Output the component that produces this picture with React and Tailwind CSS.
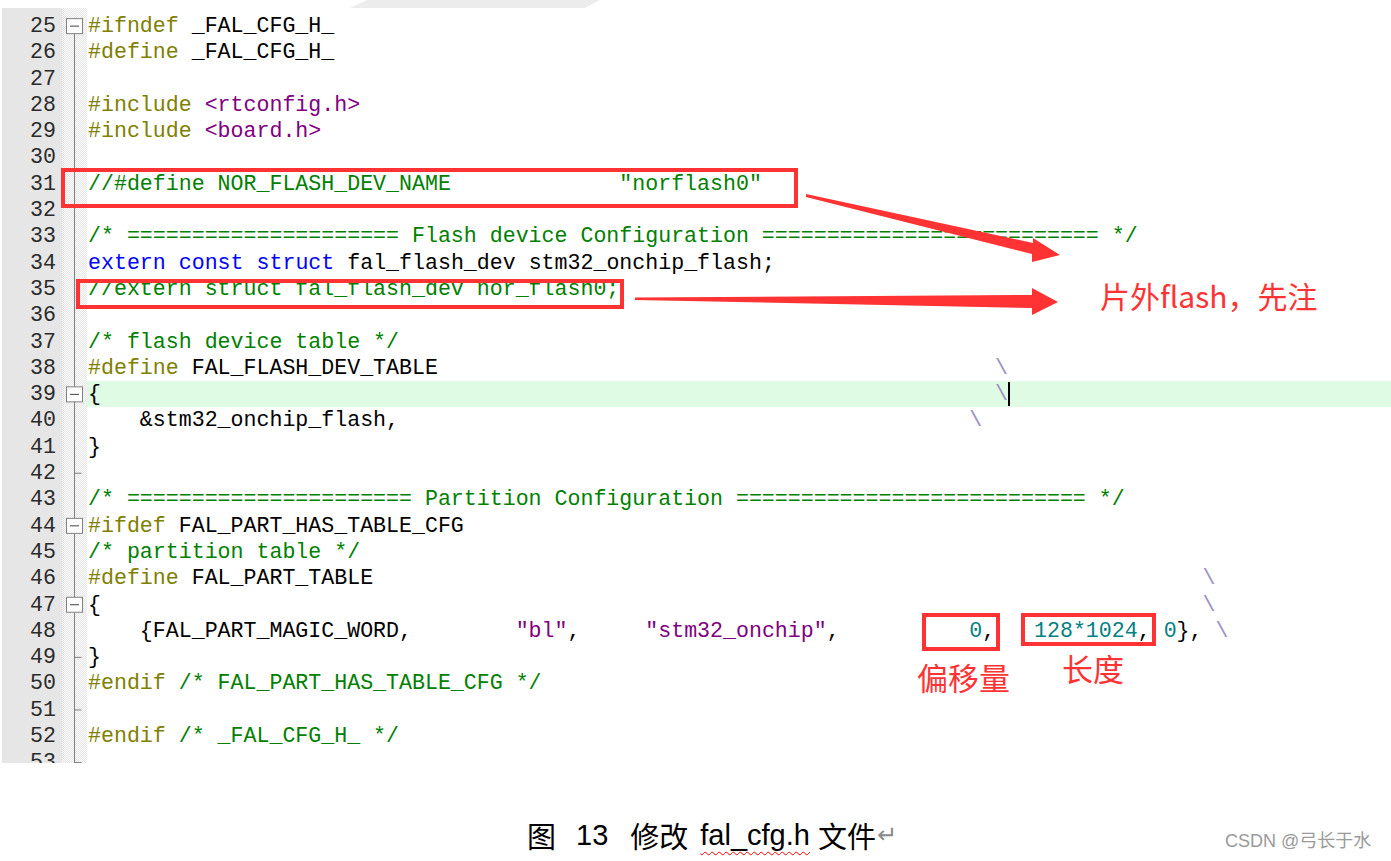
import React from "react";

const pp = "text-[#808000]";
const id = "text-[#000000]";
const inc = "text-[#800080]";
const cm = "text-[#008000]";
const kw = "text-[#0000ff]";
const str = "text-[#800080]";
const num = "text-[#008080]";
const bs = "text-[#9c8fc2]";

const sp = (n) => " ".repeat(n);
const eq = (n) => "=".repeat(n);

const CURSOR = "__cursor__";

const lines = [
  [25, [["#ifndef", pp], [" _FAL_CFG_H_", id]]],
  [26, [["#define", pp], [" _FAL_CFG_H_", id]]],
  [27, []],
  [28, [["#include", pp], [" ", id], ["<rtconfig.h>", inc]]],
  [29, [["#include", pp], [" ", id], ["<board.h>", inc]]],
  [30, []],
  [31, [["//#define NOR_FLASH_DEV_NAME" + sp(13) + '"norflash0"', cm]]],
  [32, []],
  [33, [["/* " + eq(21) + " Flash device Configuration " + eq(26) + " */", cm]]],
  [34, [["extern", kw], [" ", id], ["const", kw], [" ", id], ["struct", kw], [" fal_flash_dev stm32_onchip_flash;", id]]],
  [35, [["//extern struct fal_flash_dev nor_flash0;", cm]]],
  [36, []],
  [37, [["/* flash device table */", cm]]],
  [38, [["#define", pp], [" FAL_FLASH_DEV_TABLE" + sp(43), id], ["\\", bs]]],
  [39, [["{" + sp(69), id], ["\\", bs], [CURSOR, ""]]],
  [40, [["    &stm32_onchip_flash," + sp(44), id], ["\\", bs]]],
  [41, [["}", id]]],
  [42, []],
  [43, [["/* " + eq(22) + " Partition Configuration " + eq(27) + " */", cm]]],
  [44, [["#ifdef", pp], [" FAL_PART_HAS_TABLE_CFG", id]]],
  [45, [["/* partition table */", cm]]],
  [46, [["#define", pp], [" FAL_PART_TABLE" + sp(64), id], ["\\", bs]]],
  [47, [["{" + sp(85), id], ["\\", bs]]],
  [
    48,
    [
      ["    {FAL_PART_MAGIC_WORD," + sp(8), id],
      ['"bl"', str],
      ["," + sp(5), id],
      ['"stm32_onchip"', str],
      ["," + sp(10), id],
      ["0", num],
      ["," + sp(3), id],
      ["128*1024", num],
      [", ", id],
      ["0", num],
      ["}, ", id],
      ["\\", bs],
    ],
  ],
  [49, [["}", id]]],
  [50, [["#endif", pp], [" ", id], ["/* FAL_PART_HAS_TABLE_CFG */", cm]]],
  [51, []],
  [52, [["#endif", pp], [" ", id], ["/* _FAL_CFG_H_ */", cm]]],
  [53, []],
];

const ROW = 26.3;
const TOP = 5;
const rowCenter = (n) => TOP + (n - 25) * ROW + ROW / 2;

function FoldColumn() {
  const boxes = [25, 39, 44, 47];
  const ticks = [42, 49, 51, 53];
  return (
    <svg width="25" height="755" viewBox="0 0 25 755" className="block">
      <line x1="12.5" y1={rowCenter(25)} x2="12.5" y2="755" stroke="#808080" strokeWidth="1" />
      {ticks.map((n) => (
        <line key={n} x1="12.5" y1={rowCenter(n)} x2="19.5" y2={rowCenter(n)} stroke="#808080" strokeWidth="1" />
      ))}
      {boxes.map((n) => {
        const c = rowCenter(n);
        return (
          <g key={n}>
            <rect x="4.5" y={c - 7.5} width="16" height="15" fill="#ffffff" stroke="#808080" strokeWidth="1" />
            <line x1="8" y1={c} x2="17" y2={c} stroke="#404040" strokeWidth="1" />
          </g>
        );
      })}
    </svg>
  );
}

export default function App() {
  return (
    <div className="relative w-[1391px] h-[861px] overflow-hidden bg-white">
      {/* top strip */}
      <div className="h-[8px]">
        <svg width="1391" height="8" className="block">
          <polygon points="350,8 367,0 600,0 585,8" fill="#ececec" />
        </svg>
      </div>

      {/* code panel */}
      <div className="flex h-[755px] overflow-hidden font-['Liberation_Mono','Courier_New',monospace] text-[21.6px]">
        <div className="w-[2px] bg-white" />
        <div className="w-[60px] bg-[#e6e6e6] pt-[5px] pr-[6px] text-right text-[#2b2b2b]">
          {lines.map(([n]) => (
            <div key={n} className="h-[26.3px] leading-[26.3px] whitespace-pre">
              {n}
            </div>
          ))}
        </div>
        <div className="w-[25px] bg-[repeating-conic-gradient(#e4e4e4_0_25%,#ffffff_0_50%)] bg-[length:2px_2px]">
          <FoldColumn />
        </div>
        <div className="flex-1 pt-[5px]">
          {lines.map(([n, segs]) => (
            <div
              key={n}
              className={
                n === 39
                  ? "h-[26.3px] leading-[26.3px] whitespace-pre pl-[1px] bg-[#dffbe3]"
                  : "h-[26.3px] leading-[26.3px] whitespace-pre pl-[1px]"
              }
            >
              {segs.map(([t, c], i) =>
                t === CURSOR ? (
                  <span key={i} className="inline-block h-[24px] w-0 border-l-2 border-black align-middle" />
                ) : (
                  <span key={i} className={c}>
                    {t}
                  </span>
                )
              )}
            </div>
          ))}
        </div>
      </div>

      {/* caption */}
      <div className="mt-[54px] flex items-center pl-[527px] h-[36px] text-[29px] leading-[36px] text-black font-['Liberation_Sans','Noto_Sans_CJK_SC',sans-serif]">
        <span className="font-['Noto_Sans_CJK_SC',sans-serif]">图</span>
        <span className="ml-[20px]">13</span>
        <span className="ml-[22px] font-['Noto_Sans_CJK_SC',sans-serif]">修改</span>
        <span className="ml-[12px] underline decoration-wavy decoration-[#ff0000] decoration-1 underline-offset-[6px]">
          fal_cfg.h
        </span>
        <span className="ml-[8px] font-['Noto_Sans_CJK_SC',sans-serif]">文件</span>
        <span className="ml-[1px] text-[24px] text-[#8a8a8a] font-['DejaVu_Sans',sans-serif]">↵</span>
      </div>

      {/* annotations overlay */}
      <svg
        width="1391"
        height="861"
        viewBox="0 0 1391 861"
        className="pointer-events-none absolute left-0 top-0"
      >
        <rect x="63" y="170" width="733" height="36" fill="none" stroke="#ff3333" strokeWidth="4" />
        <rect x="78" y="281" width="544" height="26" fill="none" stroke="#ff3333" strokeWidth="4" />
        <rect x="924" y="615" width="74" height="34" fill="none" stroke="#ff3333" strokeWidth="4" />
        <rect x="1023" y="615" width="131" height="29" fill="none" stroke="#ff3333" strokeWidth="4" />
        <polygon
          points="806,194 1033,243 1033,238 1060,255 1032,262 1032,254 806,197"
          fill="#ff3333"
        />
        <polygon
          points="635,297.5 1032,295 1032,288 1058,302 1032,315 1032,308 635,300"
          fill="#ff3333"
        />
      </svg>

      <div className="absolute left-[1100px] top-[280px] whitespace-nowrap text-[30px] leading-[30px] text-[#ff3333] font-['Noto_Sans_CJK_SC',sans-serif]">
        片外flash，先注
      </div>
      <div className="absolute left-[917px] top-[661px] whitespace-nowrap text-[31px] leading-[31px] text-[#ff3333] font-['Noto_Sans_CJK_SC',sans-serif]">
        偏移量
      </div>
      <div className="absolute left-[1062px] top-[652px] whitespace-nowrap text-[31px] leading-[31px] text-[#ff3333] font-['Noto_Sans_CJK_SC',sans-serif]">
        长度
      </div>

      <div className="absolute left-[1225px] top-[830px] whitespace-nowrap text-[18px] leading-[22px] text-[#9a9a9a] font-['Liberation_Sans','Noto_Sans_CJK_SC',sans-serif]">
        CSDN @弓长于水
      </div>
    </div>
  );
}
